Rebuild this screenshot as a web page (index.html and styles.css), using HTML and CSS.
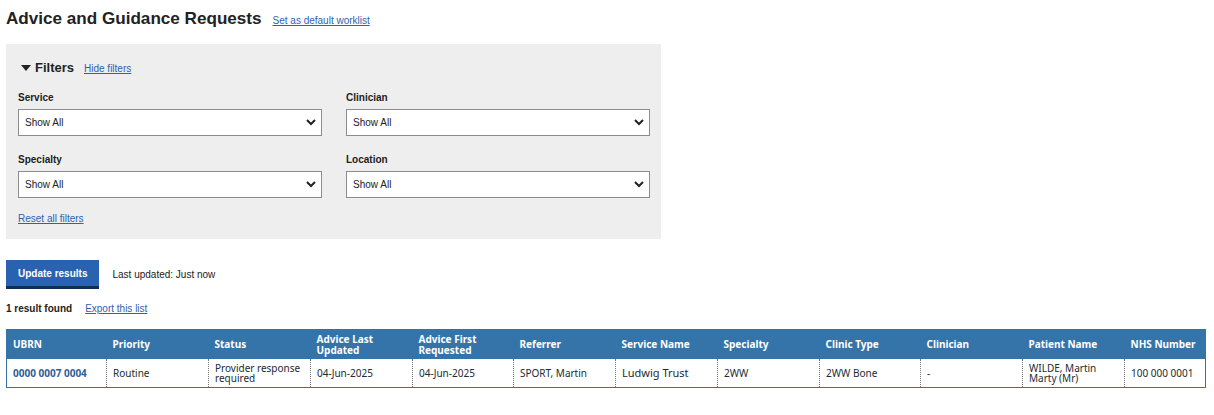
FILE: index.html
```html
<!DOCTYPE html>
<html>
  <head>
    <meta charset="utf-8" />
    <title>Advice and Guidance Requests</title>
    <link rel="stylesheet" href="styles.css">
  </head>
  <body>
    <div class="page-header">
      <h1>Advice and Guidance Requests</h1>
      <a href="#" class="small-link">Set as default worklist</a>
    </div>

    <div class="filters">
      <div class="filters-head">
        <svg class="caret" width="10" height="6" viewBox="0 0 10 6"><polygon points="0,0 10,0 5,6" fill="#222"/></svg>
        <h2>Filters</h2>
        <a href="#" class="small-link">Hide filters</a>
      </div>

      <div class="filter-grid">
        <div class="field">
          <label>Service</label>
          <div class="select-wrap">
            <select><option>Show All</option></select>
            <svg class="chevron" width="10" height="7" viewBox="0 0 10 7"><polyline points="1,1 5,5 9,1" fill="none" stroke="#222" stroke-width="2"/></svg>
          </div>
        </div>
        <div class="field">
          <label>Clinician</label>
          <div class="select-wrap">
            <select><option>Show All</option></select>
            <svg class="chevron" width="10" height="7" viewBox="0 0 10 7"><polyline points="1,1 5,5 9,1" fill="none" stroke="#222" stroke-width="2"/></svg>
          </div>
        </div>
        <div class="field">
          <label>Specialty</label>
          <div class="select-wrap">
            <select><option>Show All</option></select>
            <svg class="chevron" width="10" height="7" viewBox="0 0 10 7"><polyline points="1,1 5,5 9,1" fill="none" stroke="#222" stroke-width="2"/></svg>
          </div>
        </div>
        <div class="field">
          <label>Location</label>
          <div class="select-wrap">
            <select><option>Show All</option></select>
            <svg class="chevron" width="10" height="7" viewBox="0 0 10 7"><polyline points="1,1 5,5 9,1" fill="none" stroke="#222" stroke-width="2"/></svg>
          </div>
        </div>
      </div>

      <a href="#" class="small-link reset">Reset all filters</a>
    </div>

    <div class="actions">
      <button class="update-btn">Update results</button>
      <span class="updated">Last updated: Just now</span>
    </div>

    <div class="result-bar">
      <strong>1 result found</strong>
      <a href="#" class="small-link">Export this list</a>
    </div>

    <table class="worklist">
      <colgroup>
        <col style="width:100px"><col style="width:102px"><col style="width:102px"><col style="width:102px">
        <col style="width:101px"><col style="width:102px"><col style="width:102px"><col style="width:102px">
        <col style="width:101px"><col style="width:102px"><col style="width:102px"><col style="width:81px">
      </colgroup>
      <thead>
        <tr>
          <th>UBRN</th>
          <th>Priority</th>
          <th>Status</th>
          <th>Advice Last Updated</th>
          <th>Advice First Requested</th>
          <th>Referrer</th>
          <th>Service Name</th>
          <th>Specialty</th>
          <th>Clinic Type</th>
          <th>Clinician</th>
          <th>Patient Name</th>
          <th>NHS Number</th>
        </tr>
      </thead>
      <tbody>
        <tr>
          <td><a href="#" class="ubrn">0000 0007 0004</a></td>
          <td>Routine</td>
          <td>Provider response required</td>
          <td>04-Jun-2025</td>
          <td>04-Jun-2025</td>
          <td>SPORT, Martin</td>
          <td class="larger">Ludwig Trust</td>
          <td>2WW</td>
          <td>2WW Bone</td>
          <td>-</td>
          <td>WILDE, Martin Marty (Mr)</td>
          <td>100 000 0001</td>
        </tr>
      </tbody>
    </table>
  </body>
</html>
```

FILE: styles.css
```css
body {
  margin: 0;
  padding: 8px 6px;
  font-family: "Liberation Sans", Arial, sans-serif;
  color: #222;
  background: #fff;
}
a {
  color: #2d62b0;
}
.small-link {
  font-size: 10px;
}
.page-header {
  display: flex;
  align-items: baseline;
  gap: 11px;
  height: 22px;
}
h1 {
  margin: 0;
  font-size: 17.1px;
  line-height: 22px;
}
.filters {
  margin-top: 14px;
  width: 655px;
  box-sizing: border-box;
  background: #eeeeee;
  padding: 16px 12px 12px;
}
.filters-head {
  display: flex;
  align-items: center;
  height: 16px;
}
.caret {
  margin: 0 4px 0 3px;
}
h2 {
  margin: 0 10px 0 0;
  font-size: 13px;
  line-height: 16px;
}
.filter-grid {
  display: grid;
  grid-template-columns: 304px 304px;
  column-gap: 24px;
  row-gap: 15px;
  margin-top: 13px;
}
label {
  display: block;
  font-size: 10px;
  font-weight: bold;
  line-height: 16px;
  margin-top: 1px;
  margin-bottom: 3px;
}
.select-wrap {
  position: relative;
}
select {
  -webkit-appearance: none;
  appearance: none;
  display: block;
  width: 100%;
  height: 27px;
  box-sizing: border-box;
  border: 1px solid #8c8c8c;
  border-radius: 0;
  background: #fff;
  padding: 0 6px;
  font-family: "Liberation Sans", Arial, sans-serif;
  font-size: 10px;
  color: #222;
}
.chevron {
  position: absolute;
  right: 6px;
  top: 10px;
}
.reset {
  display: inline-block;
  margin-top: 13px;
  line-height: 16px;
}
.actions {
  display: flex;
  align-items: center;
  gap: 13px;
  margin-top: 21px;
}
.update-btn {
  height: 29px;
  padding: 0 12px;
  background: #2a62b2;
  color: #fff;
  border: none;
  border-bottom: 3px solid #0f2f52;
  font-family: "Liberation Sans", Arial, sans-serif;
  font-size: 10px;
  font-weight: bold;
  cursor: pointer;
}
.updated {
  font-size: 10px;
}
.result-bar {
  display: flex;
  align-items: center;
  gap: 13px;
  margin-top: 11px;
  height: 16px;
  font-size: 10px;
}
.worklist {
  margin-top: 13px;
  width: 1199px;
  table-layout: fixed;
  border-collapse: collapse;
  border: 1px solid #3572a8;
  font-family: "Noto Sans", "Open Sans", sans-serif;
  font-size: 10px;
}
.worklist th {
  background: #3574a8;
  color: #fff;
  text-align: left;
  font-weight: bold;
  height: 29px;
  padding: 0 6px;
  line-height: 11px;
  vertical-align: middle;
}
.worklist td {
  height: 28px;
  padding: 0 6px;
  line-height: 10px;
  vertical-align: middle;
  color: #212b32;
  border-left: 1px dotted #777;
}
.worklist td:first-child {
  border-left: none;
}
.ubrn {
  color: #2d5f96;
  font-weight: bold;
  text-decoration: none;
}
.larger {
  font-size: 11px;
}
```
